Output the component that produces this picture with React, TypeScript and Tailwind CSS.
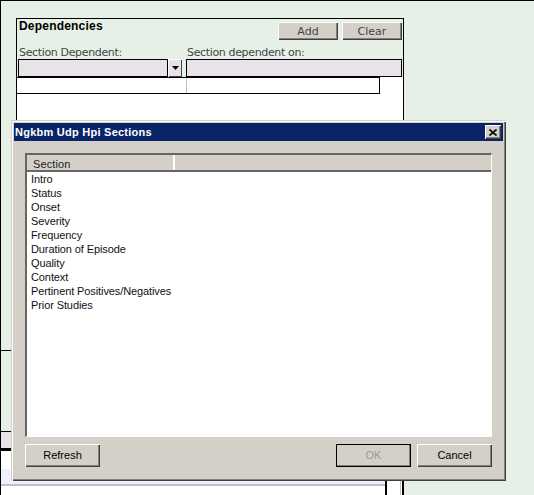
const ui = { fontFamily: '"Liberation Sans", Arial, sans-serif' };
const wide = { fontFamily: '"DejaVu Sans", sans-serif' };
const items = ["Intro","Status","Onset","Severity","Frequency","Duration of Episode","Quality","Context","Pertinent Positives/Negatives","Prior Studies"];
const bevel = "bg-[#D4D0C8] shadow-[inset_1px_1px_0_#ffffff,inset_-1px_-1px_0_#404040,inset_-2px_-2px_0_#808080]";

export default function App() {
  return (
    <div style={ui} className="relative flex h-[495px] w-[534px] flex-col overflow-hidden border-t border-l border-black bg-[#E6F0E6]">
      <div className="h-[349px] shrink-0 pt-[17px] pl-[15px]">
        <div className="flex h-[332px] w-[388px] flex-col border-x border-t border-black bg-white">
          <div className="flex h-[40px] shrink-0 flex-col bg-[#E6F0E6]">
            <div className="flex h-[28px] shrink-0 items-start justify-between">
              <span className="ml-[2px] text-[12px] leading-[15px] font-bold tracking-[0.2px] text-black">Dependencies</span>
              <div className="mt-[3px] mr-[1px] flex gap-[4px]">
                <button style={wide} className={`h-[18px] w-[60px] text-[11px] leading-none text-[#444] ${bevel}`}>Add</button>
                <button style={wide} className={`h-[18px] w-[60px] text-[11px] leading-none text-[#444] ${bevel}`}>Clear</button>
              </div>
            </div>
            <div style={wide} className="flex text-[11px] leading-[12px] tracking-[-0.35px] text-[#444]">
              <span className="ml-[2px] w-[168px]">Section Dependent:</span>
              <span>Section dependent on:</span>
            </div>
          </div>
          <div className="flex h-[18px] shrink-0 bg-[#E6F0E6] pl-[1px]">
            <div className="w-[150px] border border-black bg-[#E8E3E8]" />
            <div className="flex h-[18px] w-[14px] items-center justify-center bg-[#E8E3E8] shadow-[inset_1px_1px_0_#ffffff,inset_-1px_-1px_0_#404040]">
              <svg width="7" height="4" viewBox="0 0 7 4"><path d="M0 0h7L3.5 4z" fill="#000" /></svg>
            </div>
            <div className="ml-[4px] w-[216px] border border-black bg-[#E8E3E8]" />
          </div>
          <div className="flex h-[17px] w-[363px] shrink-0 border-t border-b border-r border-black bg-white">
            <div className="w-[170px] border-r border-[#C0C0C0]" />
          </div>
        </div>
      </div>

      <div className="h-[81px] shrink-0 w-[403px] border-t border-black bg-[#E6F0E6]" />
      <div className="h-[17px] w-[403px] shrink-0 border-t border-black bg-[#E8E3E8]" />
      <div className="h-[3px] w-[403px] shrink-0 bg-black" />
      <div className="flex min-h-0 w-[403px] flex-1 bg-white">
        <div className="flex w-[384px] flex-col">
          <div className="h-[18px]" />
          <div className="h-[15px] bg-[#EDF2FE]" />
          <div className="h-[2px] bg-[#C0C0CC]" />
        </div>
        <div className="w-[2px] bg-black" />
        <div className="w-[13px]" />
        <div className="w-[1px] bg-[#C0C0C0]" />
        <div className="w-[1px]" />
        <div className="w-[2px] bg-black" />
      </div>

      <div className="absolute top-[119px] left-[10px] flex h-[361px] w-[495px] flex-col bg-[#D4D0C8] p-[3px] shadow-[inset_1px_1px_0_#D4D0C8,inset_2px_2px_0_#ffffff,inset_-1px_-1px_0_#404040,inset_-2px_-2px_0_#808080]">
        <div className="flex h-[18px] shrink-0 items-center justify-between bg-[#0A246A] pr-[2px] pl-[1px]">
          <span className="text-[11px] leading-none font-bold tracking-[0.25px] text-white">Ngkbm Udp Hpi Sections</span>
          <button className={`flex h-[14px] w-[16px] items-center justify-center ${bevel}`}>
            <svg width="8" height="7" viewBox="0 0 8 7"><path d="M0.5 0.5L7.5 6.5M7.5 0.5L0.5 6.5" stroke="#000" strokeWidth="1.6" /></svg>
          </button>
        </div>
        <div className="flex min-h-0 flex-1 flex-col px-[11px] pt-[12px] pb-[7px]">
          <div className="flex h-[284px] flex-col border-t-2 border-l-2 border-t-[#666] border-l-[#666] border-r border-b border-r-white border-b-white bg-white">
            <div className="flex h-[17px] shrink-0 border-b-2 border-[#666] bg-[#D4D0C8] text-[11px] leading-[18px] tracking-[0.1px] text-[#222]">
              <div className="w-[148px] border-r-2 border-white pl-[6px]">Section</div>
            </div>
            <ul className="pl-[4px] text-[11px] leading-[14px] tracking-[-0.1px] text-[#111]">
              {items.map((t) => <li key={t} className="h-[14px]">{t}</li>)}
            </ul>
          </div>
          <div className="mt-[7px] flex text-[11px] text-black">
            <button className={`h-[23px] w-[75px] ${bevel}`}>Refresh</button>
            <button className={`ml-auto h-[23px] w-[75px] text-[#999] outline outline-1 -outline-offset-1 outline-black ${bevel}`}>OK</button>
            <button className={`ml-[6px] h-[23px] w-[75px] ${bevel}`}>Cancel</button>
          </div>
        </div>
      </div>
    </div>
  );
}
